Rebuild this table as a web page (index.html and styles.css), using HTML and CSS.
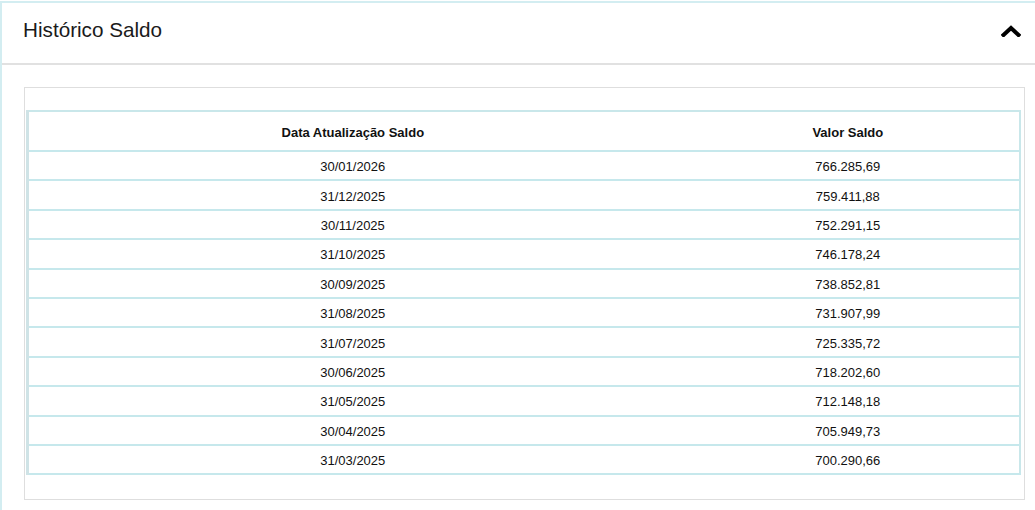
FILE: index.html
```html
<!DOCTYPE html>
<html lang="pt-BR">
<head>
<meta charset="utf-8">
<title>Histórico Saldo</title>
<link rel="stylesheet" href="styles.css">
</head>
<body>
<section class="panel">
  <header class="panel-head">
    <h2 class="panel-title">Histórico Saldo</h2>
    <svg class="chevron" width="20" height="12" viewBox="0 0 20 12" aria-hidden="true">
      <polyline points="2.5,10 10,3 17.5,10" fill="none" stroke="#000" stroke-width="4" stroke-linecap="square" stroke-linejoin="miter"/>
    </svg>
  </header>
  <div class="panel-body">
    <div class="box">
      <table class="grid">
        <colgroup><col class="c1"><col class="c2"></colgroup>
        <thead>
          <tr><th>Data Atualização Saldo</th><th>Valor Saldo</th></tr>
        </thead>
        <tbody>
          <tr><td>30/01/2026</td><td>766.285,69</td></tr>
          <tr><td>31/12/2025</td><td>759.411,88</td></tr>
          <tr><td>30/11/2025</td><td>752.291,15</td></tr>
          <tr><td>31/10/2025</td><td>746.178,24</td></tr>
          <tr><td>30/09/2025</td><td>738.852,81</td></tr>
          <tr><td>31/08/2025</td><td>731.907,99</td></tr>
          <tr><td>31/07/2025</td><td>725.335,72</td></tr>
          <tr><td>30/06/2025</td><td>718.202,60</td></tr>
          <tr><td>31/05/2025</td><td>712.148,18</td></tr>
          <tr><td>30/04/2025</td><td>705.949,73</td></tr>
          <tr><td>31/03/2025</td><td>700.290,66</td></tr>
        </tbody>
      </table>
    </div>
  </div>
</section>
</body>
</html>
```

FILE: styles.css
```css
html, body {
  margin: 0;
  padding: 0;
  background: #fff;
  overflow: hidden;
}
body {
  font-family: "Liberation Sans", Arial, sans-serif;
  color: #111;
}
.panel {
  margin-top: 1px;
  width: 1045px;
  border: 2px solid #d3edf1;
  background: #fff;
  box-sizing: border-box;
}
.panel-head {
  height: 60px;
  border-bottom: 2px solid #e1e1e1;
  display: flex;
  align-items: center;
  justify-content: space-between;
  padding: 0 0 0 21px;
}
.panel-title {
  margin: 0;
  font-weight: normal;
  font-size: 20.7px;
  color: #1a1a1a;
  position: relative;
  top: -3px;
}
.chevron {
  margin-right: 22px;
  display: block;
  position: relative;
  top: -2px;
}
.panel-body {
  padding: 22px 22px 12px 22px;
}
.box {
  border: 1px solid #dedede;
  padding: 22px 3px 24px 1px;
  width: 995px;
}
.grid {
  width: 100%;
  border-collapse: collapse;
  border: 2px solid #c9e7ea;
  border-left: 3px solid #cfe3e6;
  font-size: 13px;
  color: #111;
}
.grid .c1 { width: 65.4%; }
.grid th {
  height: 35px;
  padding: 3px 0 0;
  font-weight: bold;
  text-align: center;
  border-bottom: 2px solid #c6e8ec;
}
.grid td {
  height: 25.4px;
  padding: 2px 0 0;
  text-align: center;
  border-bottom: 2px solid #c6e8ec;
}
```
